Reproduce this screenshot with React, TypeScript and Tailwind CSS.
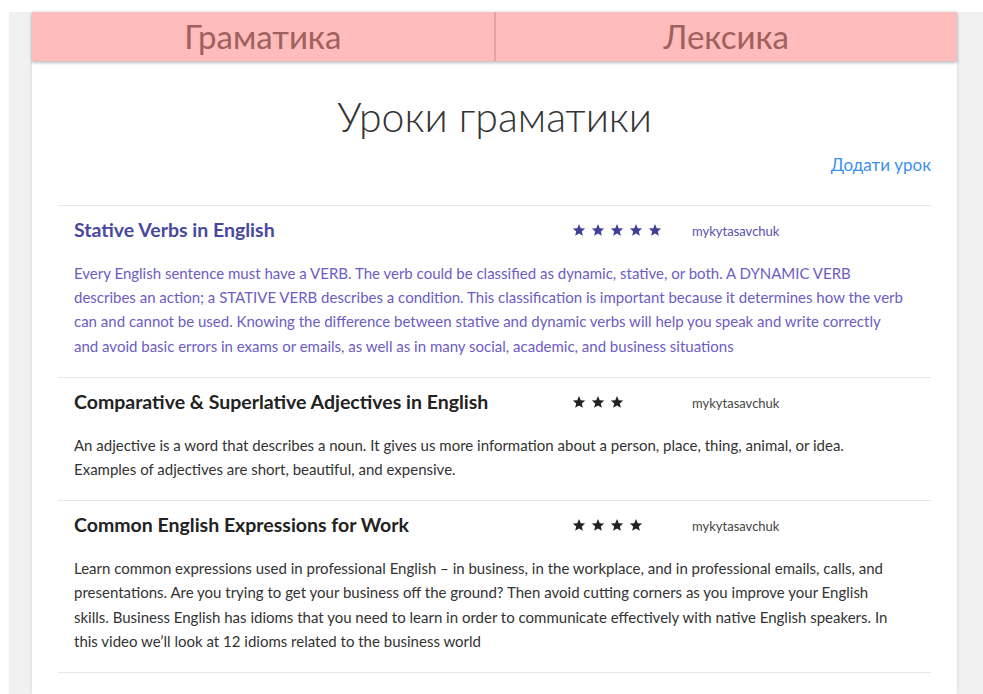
import { useState } from 'react'

type Lesson = {
  title: string
  rating: number
  author: string
  text: string
}

const lessons: Lesson[] = [
  {
    title: 'Stative Verbs in English',
    rating: 5,
    author: 'mykytasavchuk',
    text: 'Every English sentence must have a VERB. The verb could be classified as dynamic, stative, or both. A DYNAMIC VERB describes an action; a STATIVE VERB describes a condition. This classification is important because it determines how the verb can and cannot be used. Knowing the difference between stative and dynamic verbs will help you speak and write correctly and avoid basic errors in exams or emails, as well as in many social, academic, and business situations',
  },
  {
    title: 'Comparative & Superlative Adjectives in English',
    rating: 3,
    author: 'mykytasavchuk',
    text: 'An adjective is a word that describes a noun. It gives us more information about a person, place, thing, animal, or idea. Examples of adjectives are short, beautiful, and expensive.',
  },
  {
    title: 'Common English Expressions for Work',
    rating: 4,
    author: 'mykytasavchuk',
    text: 'Learn common expressions used in professional English – in business, in the workplace, and in professional emails, calls, and presentations. Are you trying to get your business off the ground? Then avoid cutting corners as you improve your English skills. Business English has idioms that you need to learn in order to communicate effectively with native English speakers. In this video we’ll look at 12 idioms related to the business world',
  },
]

function Star() {
  return (
    <svg viewBox="0 0 24 24" className="h-[14px] w-[14px] fill-current">
      <path d="M12 1.8l3 7.1 7.6.6-5.8 5 1.8 7.5L12 18l-6.6 4 1.8-7.5-5.8-5 7.6-.6z" />
    </svg>
  )
}

function LessonRow({ lesson, active, onHover }: { lesson: Lesson; active: boolean; onHover: () => void }) {
  return (
    <li onMouseEnter={onHover} className="border-t border-[#e6e6e6] pl-4 pr-4 pt-[10px] pb-[18.5px]">
      <div className="flex items-center">
        <h3
          className={`flex-1 text-[19.5px] leading-[28px] font-bold ${active ? 'text-[#4848a0]' : 'text-[#222]'}`}
        >
          {lesson.title}
        </h3>
        <div className={`flex w-[120px] gap-[5px] ${active ? 'text-[#40409a]' : 'text-[#222]'}`}>
          {Array.from({ length: lesson.rating }).map((_, i) => (
            <Star key={i} />
          ))}
        </div>
        <span className={`w-[223px] pt-[4px] text-[13px] ${active ? 'text-[#5a4fb0]' : 'text-[#444]'}`}>
          {lesson.author}
        </span>
      </div>
      <p
        className={`mt-[17px] max-w-[832px] text-[15px] leading-[24.4px] ${active ? 'text-[#6c5cc4]' : 'text-[#333]'}`}
      >
        {lesson.text}
      </p>
    </li>
  )
}

export default function App() {
  const [hovered, setHovered] = useState(0)

  return (
    <div className="min-h-screen bg-white pt-3 pl-[9px] font-['Lato','Noto_Sans',sans-serif]">
      <div className="min-h-[682px] bg-[#f1f1f1] pl-[23px]">
        <div className="min-h-[682px] w-[925px] bg-white shadow-[0_0_4px_rgba(0,0,0,0.12)]">
          <nav className="flex h-[49px] bg-[#ffbcbc] shadow-[0_2px_3px_rgba(0,0,0,0.25)]">
            <a className="flex flex-1 items-center justify-center border-r-2 border-[#e3a3a3] text-[33px] text-[#a0605e]">
              Граматика
            </a>
            <a className="flex flex-1 items-center justify-center text-[33px] text-[#a0605e]">Лексика</a>
          </nav>

          <main className="px-[26px]">
            <h1 className="mt-[31px] text-center text-[41px] leading-[50px] font-light text-[#333]">
              Уроки граматики
            </h1>
            <div className="mt-[10px] flex justify-end">
              <a className="text-[17px] text-[#3b8ff0]">Додати урок</a>
            </div>

            <ul className="mt-[27px] border-b border-[#e6e6e6]">
              {lessons.map((lesson, i) => (
                <LessonRow key={lesson.title} lesson={lesson} active={hovered === i} onHover={() => setHovered(i)} />
              ))}
            </ul>
          </main>
        </div>
      </div>
    </div>
  )
}
